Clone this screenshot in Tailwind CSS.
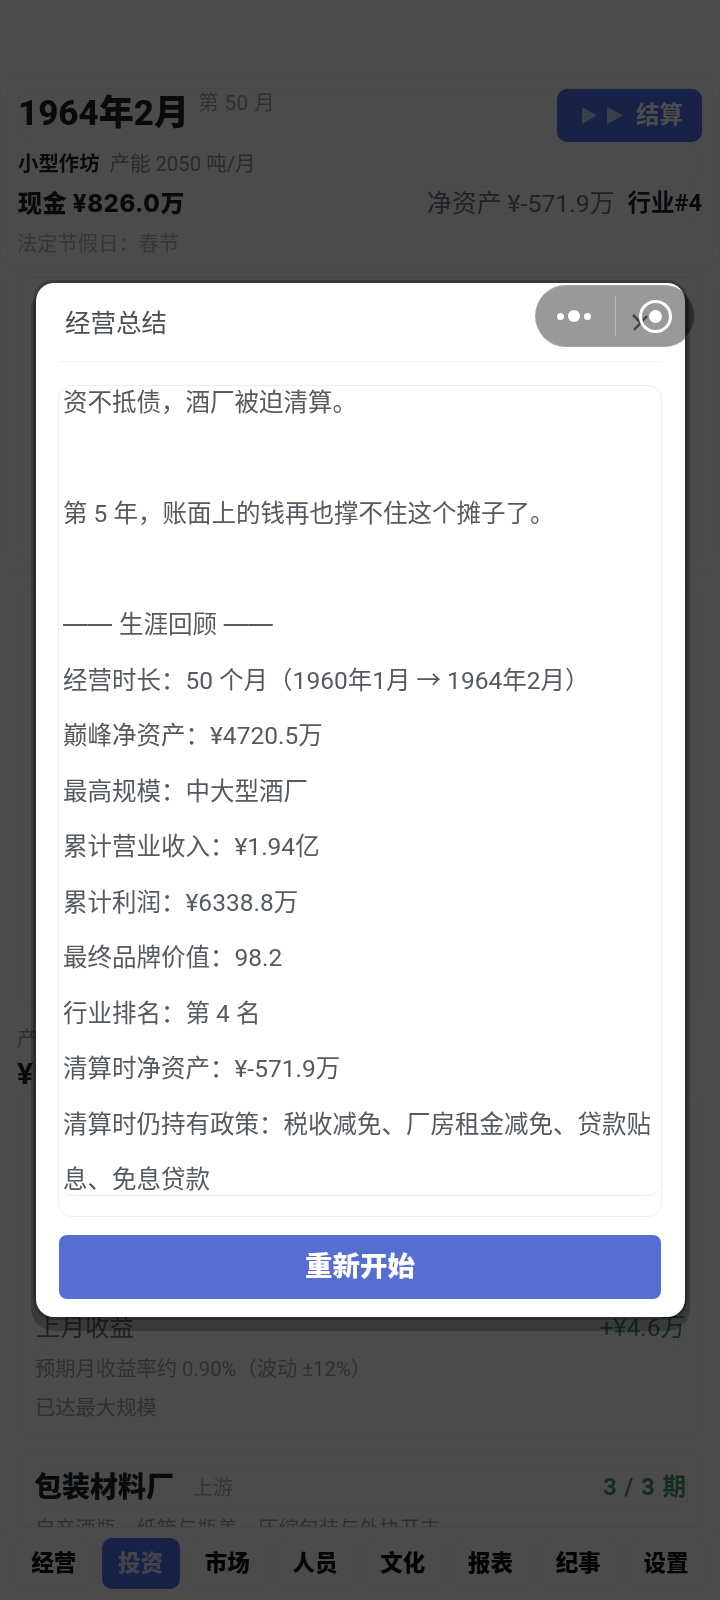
<!DOCTYPE html>
<html lang="zh"><head><meta charset="utf-8">
<script src="https://cdn.jsdelivr.net/npm/@tailwindcss/browser@4"></script>
</head>
<body class="m-0">
<div class="relative w-[720px] h-[1600px] overflow-hidden bg-[#fbfbfb] font-['Roboto','Noto_Sans_CJK_SC',sans-serif] text-[#1f2328] blur-[0.3px]">
  <div class="pt-[73px]">
    <div class="h-[196px] rounded-[16px] border border-[#f2f2f2] px-[17px] pt-[14px]">
      <div class="flex items-start justify-between h-[54px] rounded-[12px] border border-[#f0f0f0]">
        <div class="flex items-start">
          <span class="text-[35px] leading-[46px] font-extrabold mt-[2px] -ml-[1px]">1964年2月</span>
          <span class="ml-[9px] mt-[0px] text-[20.5px] leading-[28px] tracking-[0.5px] text-[#9ca3af]">第 50 月</span>
        </div>
        <div class="flex items-center justify-center gap-[13px] w-[145px] h-[53px] rounded-[10px] bg-[#5070ec] text-white mr-[-1px] pl-[6px]">
          <svg width="41" height="17" viewBox="0 0 41 17"><path d="M0 0l15 8.5L0 17zM25 0l16 8.5L25 17z" fill="#c4d0ee"/></svg>
          <span class="text-[23.5px] font-bold leading-none">结算</span>
        </div>
      </div>
      <div class="flex items-center h-[30px] mt-[7px] -ml-[1px] rounded-[12px] border border-[#f0f0f0] text-[20.4px]">
        <span class="font-bold">小型作坊</span><span class="ml-[10px] text-[#8b9098]">产能 2050 吨/月</span>
      </div>
      <div class="flex items-center justify-between h-[36px] mt-[7px] -ml-[1px] rounded-[12px] border border-[#f0f0f0]">
        <span class="text-[24px] font-extrabold font-['Inter','Noto_Sans_CJK_SC',sans-serif] tracking-[0.5px]">现金 ¥826.0万</span>
        <div class="flex items-center -mr-[1px]"><span class="text-[24.8px] text-[#6b7280]">净资产 ¥-571.9万</span><span class="ml-[13px] text-[23.5px] font-bold">行业#4</span></div>
      </div>
      <div class="mt-[8px] -ml-[1px] text-[20.3px] leading-[28px] text-[#b0b5bc]">法定节假日：春节</div>
    </div>
    <div class="mt-[3px] h-[300px] rounded-[16px] border border-[#f2f2f2] p-[4px_16px]"><div class="h-full rounded-[16px] border border-[#f0f0f0]"></div></div>
    <div class="mt-[14px] mx-[16px] h-[420px] rounded-[16px] border border-[#f0f0f0]"></div>
    <div class="mx-[16px] h-[87px] px-[1px] pt-[21px]">
      <div class="text-[20px] leading-[24px] text-[#9ca3af]">产</div>
      <div class="mt-[6px] text-[30px] leading-[34px] font-bold">¥</div>
    </div>
    <div class="mx-[16px] h-[346px] rounded-[16px] border border-[#f0f0f0] px-[18px] flex flex-col justify-end pb-[10px]">
      <div class="flex items-center justify-between h-[38px] rounded-[10px] border border-[#f0f0f0] -mr-[1px]">
        <span class="text-[24.5px] text-[#6b7280]">上月收益</span><span class="text-[24.5px] text-[#3f9a68]">+¥4.6万</span>
      </div>
      <div class="mt-[3px] text-[20.3px] leading-[39px] text-[#9ca3af]">预期月收益率约 0.90%（波动 ±12%）</div>
      <div class="text-[20.3px] leading-[39px] text-[#9ca3af]">已达最大规模</div>
    </div>
    <div class="mt-[12px] mx-[16px] h-[200px] rounded-[16px] border border-[#f0f0f0] px-[18px] pt-[16px]">
      <div class="flex items-center justify-between h-[40px] rounded-[10px] border border-[#f0f0f0] -mr-[3px] -ml-[2px]">
        <div class="flex items-center"><span class="text-[28px] font-extrabold">包装材料厂</span><span class="ml-[19px] text-[20px] text-[#b0b5bc]">上游</span></div>
        <span class="text-[23.5px] font-bold text-[#3f9a68] tracking-[1px]">3 / 3 期</span>
      </div>
      <div class="mt-[6px] text-[20.3px] leading-[30px] text-[#9ca3af]">自产酒瓶、纸箱与瓶盖，压缩包装与外协开支</div>
    </div>
  </div>

  <div class="absolute left-0 right-0 bottom-0 h-[73px] bg-[#fbfbfb] rounded-t-[14px] border-t border-[#ededed] flex gap-[8px] px-[14px] pt-[10px]">
    <div class="flex-1 h-[51px] flex items-center justify-center rounded-[10px] border border-[#f0f0f0] text-[22.5px] font-extrabold text-[#111]">经营</div>
    <div class="flex-1 h-[51px] flex items-center justify-center rounded-[10px] bg-[#5070ec] text-[22.5px] font-extrabold text-white/80">投资</div>
    <div class="flex-1 h-[51px] flex items-center justify-center rounded-[10px] border border-[#f0f0f0] text-[22.5px] font-extrabold text-[#111]">市场</div>
    <div class="flex-1 h-[51px] flex items-center justify-center rounded-[10px] border border-[#f0f0f0] text-[22.5px] font-extrabold text-[#111]">人员</div>
    <div class="flex-1 h-[51px] flex items-center justify-center rounded-[10px] border border-[#f0f0f0] text-[22.5px] font-extrabold text-[#111]">文化</div>
    <div class="flex-1 h-[51px] flex items-center justify-center rounded-[10px] border border-[#f0f0f0] text-[22.5px] font-extrabold text-[#111]">报表</div>
    <div class="flex-1 h-[51px] flex items-center justify-center rounded-[10px] border border-[#f0f0f0] text-[22.5px] font-extrabold text-[#111]">纪事</div>
    <div class="flex-1 h-[51px] flex items-center justify-center rounded-[10px] border border-[#f0f0f0] text-[22.5px] font-extrabold text-[#111]">设置</div>
  </div>

  <div class="absolute inset-0 bg-black/70"></div>

  <div class="absolute left-[36px] top-[283px] w-[649px] h-[1034px] rounded-[18px] bg-white shadow-[0_0_0_3px_rgba(0,0,0,0.22),0_9px_0_5px_rgba(0,0,0,0.22)] pl-[23px] pr-[24px] flex flex-col">
    <div class="flex items-center h-[79px] pl-[6px] pt-[2px] border-b border-[#f2f2f2] text-[25.5px] text-[#4a4f55]">经营总结</div>
    <div class="mt-[23px] -ml-[1px] -mr-[1px] h-[832px] rounded-[14px] border border-[#eeeeee]">
      <div class="h-[810px] overflow-hidden rounded-[14px] border-b border-[#e8e8e8] pl-[4px] pr-[4px] text-[24.5px] leading-[55.5px] text-[#555a60]">
        <div class="-mt-[11px]">
        <div>资不抵债，酒厂被迫清算。</div>
        <div class="h-[55.5px]"></div>
        <div>第 5 年，账面上的钱再也撑不住这个摊子了。</div>
        <div class="h-[55.5px]"></div>
        <div class="font-['Inter','Noto_Sans_CJK_SC',sans-serif]">—— 生涯回顾 ——</div>
        <div>经营时长：50 个月（1960年1月 → 1964年2月）</div>
        <div>巅峰净资产：¥4720.5万</div>
        <div>最高规模：中大型酒厂</div>
        <div>累计营业收入：¥1.94亿</div>
        <div>累计利润：¥6338.8万</div>
        <div>最终品牌价值：98.2</div>
        <div>行业排名：第 4 名</div>
        <div>清算时净资产：¥-571.9万</div>
        <div>清算时仍持有政策：税收减免、厂房租金减免、贷款贴息、免息贷款</div>
        </div>
      </div>
    </div>
    <div class="mt-[18px] h-[64px] rounded-[8px] bg-[#566dd2] flex items-center justify-center text-white text-[27.5px] font-extrabold">重新开始</div>
  </div>

  <svg class="absolute left-[630px] top-[312px]" width="20" height="22" viewBox="0 0 20 22"><path d="M3 3l8 8M4 18L17 4" stroke="#707070" stroke-width="2.5" fill="none"/></svg>

  <div class="absolute left-[535px] top-[285px] w-[160px] h-[62px] rounded-full bg-black/40 border border-white/10 flex items-center">
    <div class="w-[79px] flex items-center justify-center gap-[4px] pr-[3px]">
      <span class="w-[7px] h-[7px] rounded-full bg-white"></span><span class="w-[12px] h-[12px] rounded-full bg-white"></span><span class="w-[7px] h-[7px] rounded-full bg-white"></span>
    </div>
    <div class="w-px h-[40px] bg-white/30"></div>
    <div class="flex-1 flex items-center justify-center">
      <div class="w-[33px] h-[33px] rounded-full border-[3px] border-white flex items-center justify-center"><span class="w-[13px] h-[13px] rounded-full bg-white"></span></div>
    </div>
  </div>
</div>
</body></html>
